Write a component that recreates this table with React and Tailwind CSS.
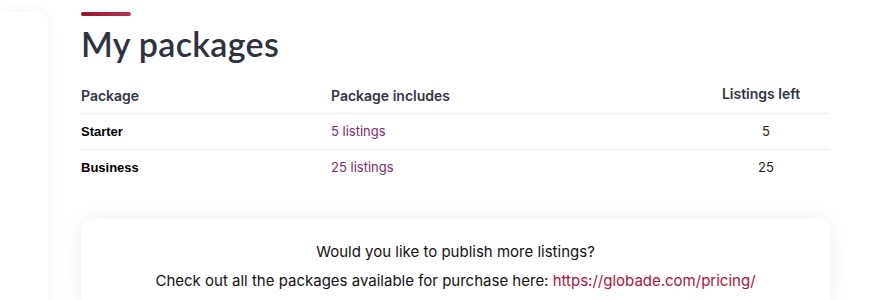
export default function App() {
  const rows = [
    { name: "Starter", includes: "5 listings", left: "5" },
    { name: "Business", includes: "25 listings", left: "25" },
  ];
  return (
    <div className="w-[896px] h-[300px] bg-white overflow-hidden flex" style={{ fontFamily: "Inter, 'Liberation Sans', sans-serif" }}>
      <div className="w-[48px] shrink-0 pt-[12px]">
        <div className="h-[320px] bg-white rounded-tr-[12px] shadow-[0_0_16px_rgba(30,30,80,0.06)]"></div>
      </div>
      <div className="ml-[33px] w-[749px] pt-[12px]">
        <div className="w-[50px] h-[4px] rounded-full bg-gradient-to-r from-[#9a0b2b] to-[#b23452]"></div>
        <h1 className="mt-[8px] text-[34px] leading-[40px] font-semibold text-[#2e3241] tracking-[0.3px]" style={{ fontFamily: "Lato, Inter, sans-serif" }}>
          My packages
        </h1>
        <div className="mt-[12px]">
          <div className="flex h-[38px] items-center border-b border-[#ececee] text-[14px] font-semibold text-[#323644]">
            <div className="w-[250px] pt-[2px]">Package</div>
            <div className="flex-1 pt-[2px]">Package includes</div>
            <div className="w-[138px] text-center pb-[2px]">Listings left</div>
          </div>
          {rows.map((r, i) => (
            <div key={r.name} className={`flex h-[36px] items-center text-[13px] ${i === 0 ? "border-b border-[#ececee]" : ""}`}>
              <div className="w-[250px] font-bold text-black" style={{ fontFamily: "'Liberation Sans', Arial, sans-serif" }}>{r.name}</div>
              <div className="flex-1 text-[#7d2b6e]">{r.includes}</div>
              <div className="w-[138px] text-center pl-[10px] text-[#222]">{r.left}</div>
            </div>
          ))}
        </div>
        <div className="mt-[33px] bg-white rounded-[10px] shadow-[0_0_24px_rgba(30,30,80,0.07)] pt-[23px] pb-[20px] text-center text-[15px] text-[#111] leading-[20px]">
          <p>Would you like to publish more listings?</p>
          <p className="mt-[9px]">
            Check out all the packages available for purchase here:{" "}
            <a className="text-[#a5153c]" href="#">https://globade.com/pricing/</a>
          </p>
        </div>
      </div>
    </div>
  );
}
